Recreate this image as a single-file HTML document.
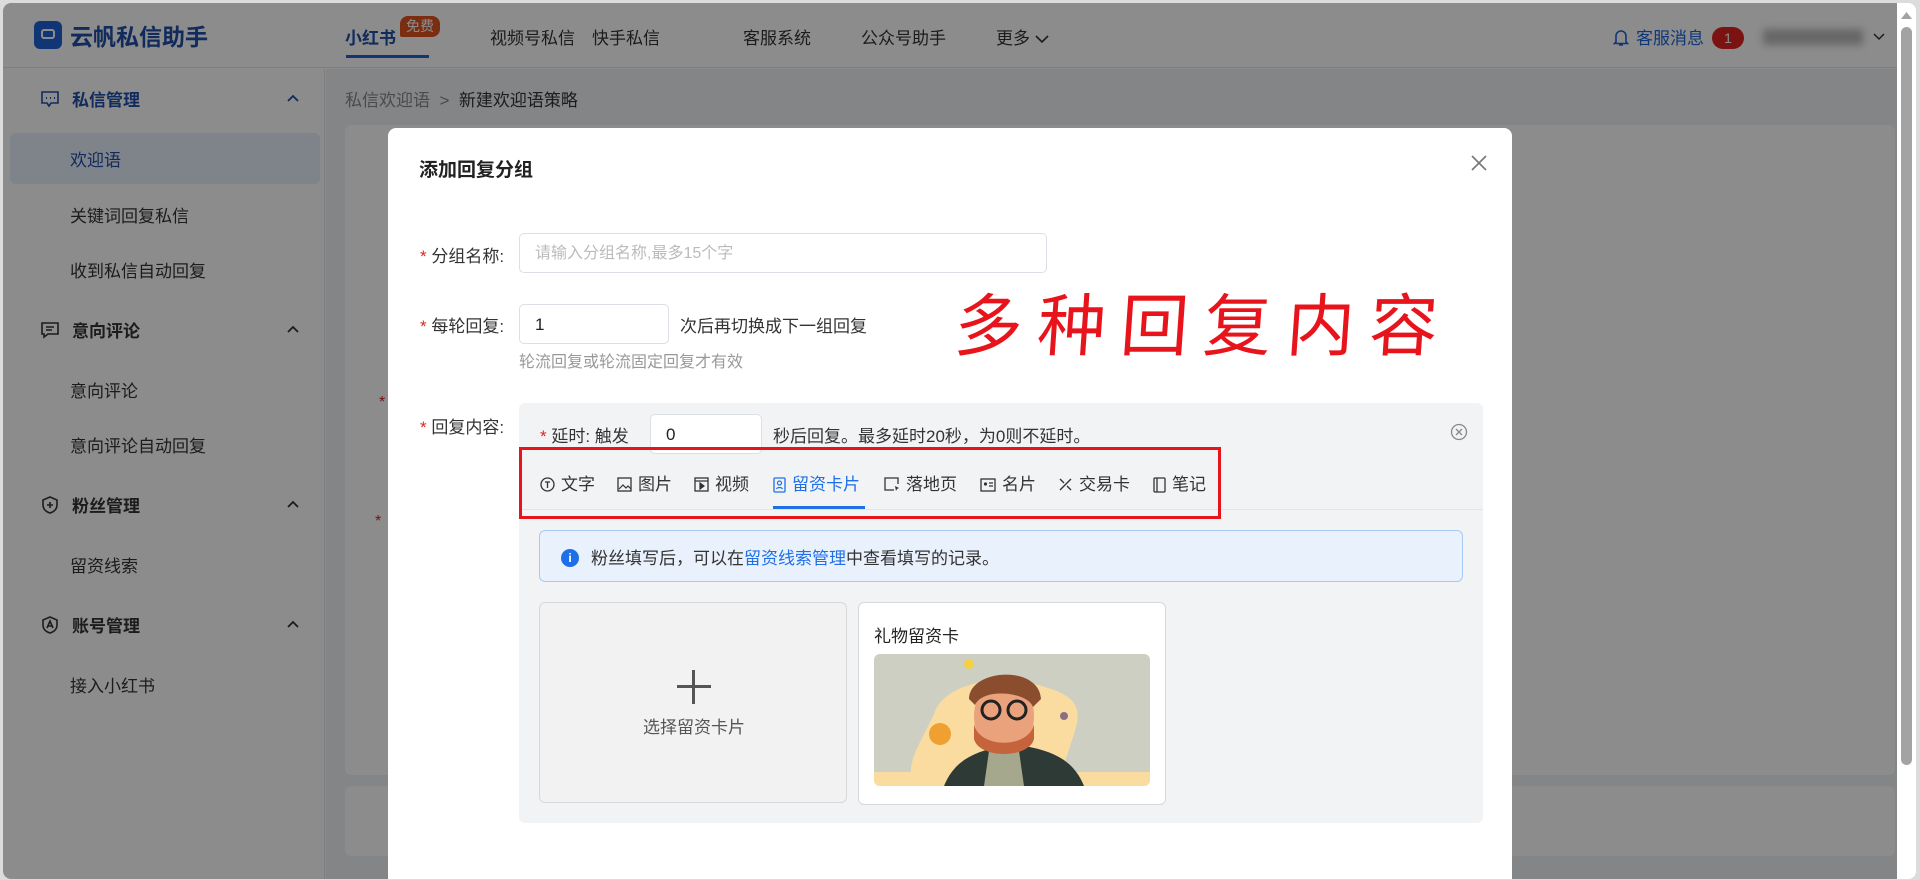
<!DOCTYPE html>
<html><head><meta charset="utf-8"><style>
*{margin:0;padding:0;box-sizing:border-box}
body{width:1920px;height:880px;overflow:hidden;background:#dcdcdc;font-family:"Liberation Sans","Noto Sans CJK SC",sans-serif;position:relative;color:#333;line-height:1}
.a{position:absolute;white-space:nowrap}
#win{position:absolute;left:3px;top:3px;width:1913px;height:876px;background:#fff;border-radius:8px;overflow:hidden}
.ov{position:absolute;left:0;top:0;width:1894px;height:876px;background:rgba(0,0,0,.45)}
.f17{font-size:17px}
.tab{position:absolute;display:flex;align-items:center;gap:6px}
.tab svg{flex:none}
</style></head><body>
<div id="win">
 <!-- header -->
 <div class="a" style="left:0;top:0;width:1894px;height:65px;background:#fff;border-bottom:1px solid #e5e5e5"></div>
 <div class="a" style="left:31px;top:18px;width:28px;height:28px;background:#1f63d8;border-radius:6px"><div style="position:absolute;left:7px;top:8px;width:14px;height:10px;border:2px solid #fff;border-radius:3px"></div></div>
 <div class="a" style="left:67px;top:23px;font-size:23px;font-weight:bold;color:#1f4fa8">云帆私信助手</div>
 <div class="a f17" style="left:342px;top:27px;color:#1f4fa8;font-weight:bold">小红书</div>
 <div class="a" style="left:397px;top:13px;width:40px;height:21px;background:#e0531f;border-radius:8px 8px 8px 2px;color:#fff;font-size:14px;text-align:center;line-height:21px">免费</div>
 <div class="a" style="left:343px;top:52px;width:83px;height:3px;background:#1f63d8"></div>
 <div class="a f17" style="left:487px;top:27px;color:#333">视频号私信</div>
 <div class="a f17" style="left:589px;top:27px;color:#333">快手私信</div>
 <div class="a f17" style="left:740px;top:27px;color:#333">客服系统</div>
 <div class="a f17" style="left:858px;top:27px;color:#333">公众号助手</div>
 <div class="a f17" style="left:993px;top:27px;color:#333">更多 <svg width="14" height="10" viewBox="0 0 14 10"><path d="M1 2l6 6 6-6" stroke="#333" stroke-width="1.6" fill="none"/></svg></div>
 <svg class="a" style="left:1610px;top:25px" width="16" height="19" viewBox="0 0 16 19"><path d="M3 14V8a5 5 0 0110 0v6l1.5 1.5h-13zM6 17h4" stroke="#1f63d8" stroke-width="1.6" fill="none"/></svg>
 <div class="a f17" style="left:1633px;top:27px;color:#1f63d8">客服消息</div>
 <div class="a" style="left:1709px;top:24px;width:32px;height:22px;background:#e02323;border-radius:11px;color:#fff;font-size:14px;text-align:center;line-height:22px">1</div>
 <div class="a" style="left:1760px;top:26px;width:100px;height:16px;background:#bbb;filter:blur(4px)"></div>
 <svg class="a" style="left:1870px;top:30px" width="12" height="8" viewBox="0 0 12 8"><path d="M1 1l5 5 5-5" stroke="#333" stroke-width="1.5" fill="none"/></svg>
 <!-- sidebar -->
 <div class="a" style="left:0;top:66px;width:322px;height:810px;background:#fff;border-right:1px solid #e5e5e5"></div>
 <div class="a" style="left:7px;top:130px;width:310px;height:51px;background:#e8eefb;border-radius:6px"></div>
 <div class="a f17" style="left:69px;top:89px;color:#1f4fa8;font-weight:bold">私信管理</div>
 <div class="a f17" style="left:67px;top:149px;color:#1f4fa8">欢迎语</div>
 <div class="a f17" style="left:67px;top:205px">关键词回复私信</div>
 <div class="a f17" style="left:67px;top:260px">收到私信自动回复</div>
 <div class="a f17" style="left:69px;top:320px;font-weight:bold">意向评论</div>
 <div class="a f17" style="left:67px;top:380px">意向评论</div>
 <div class="a f17" style="left:67px;top:435px">意向评论自动回复</div>
 <div class="a f17" style="left:69px;top:495px;font-weight:bold">粉丝管理</div>
 <div class="a f17" style="left:67px;top:555px">留资线索</div>
 <div class="a f17" style="left:69px;top:615px;font-weight:bold">账号管理</div>
 <div class="a f17" style="left:67px;top:675px">接入小红书</div>
 <svg class="a" style="left:37px;top:86px" width="20" height="20" viewBox="0 0 20 20"><path d="M2 3h16v11H11l-2 3-2-3H2z" stroke="#1f4fa8" stroke-width="1.6" fill="none"/><path d="M6 9h1M10 9h1M14 9h1" stroke="#1f4fa8" stroke-width="2"/></svg>
 <svg class="a" style="left:37px;top:317px" width="20" height="20" viewBox="0 0 20 20"><path d="M2 3h16v11H8l-4 3v-3H2z M6 7h8M6 10h6" stroke="#333" stroke-width="1.6" fill="none"/></svg>
 <svg class="a" style="left:37px;top:492px" width="20" height="20" viewBox="0 0 20 20"><path d="M10 2l7 3v5c0 4-3 7-7 8-4-1-7-4-7-8V5z M7 10h6M10 7v6" stroke="#333" stroke-width="1.6" fill="none"/></svg>
 <svg class="a" style="left:37px;top:612px" width="20" height="20" viewBox="0 0 20 20"><path d="M10 2l7 3v5c0 4-3 7-7 8-4-1-7-4-7-8V5z M7 13l3-7 3 7M8 11h4" stroke="#333" stroke-width="1.6" fill="none"/></svg>
 <svg class="a" style="left:284px;top:91px" width="12" height="8" viewBox="0 0 12 8"><path d="M1 7l5-5 5 5" stroke="#1f4fa8" stroke-width="1.8" fill="none"/></svg>
 <svg class="a" style="left:284px;top:322px" width="12" height="8" viewBox="0 0 12 8"><path d="M1 7l5-5 5 5" stroke="#333" stroke-width="1.8" fill="none"/></svg>
 <svg class="a" style="left:284px;top:497px" width="12" height="8" viewBox="0 0 12 8"><path d="M1 7l5-5 5 5" stroke="#333" stroke-width="1.8" fill="none"/></svg>
 <svg class="a" style="left:284px;top:617px" width="12" height="8" viewBox="0 0 12 8"><path d="M1 7l5-5 5 5" stroke="#333" stroke-width="1.8" fill="none"/></svg>
 <!-- content -->
 <div class="a" style="left:323px;top:66px;width:1571px;height:810px;background:#f0f2f5"></div>
 <div class="a f17" style="left:342px;top:89px;color:#888">私信欢迎语 &nbsp;&gt;&nbsp; <span style="color:#333">新建欢迎语策略</span></div>
 <div class="a" style="left:342px;top:122px;width:1550px;height:650px;background:#fff;border-radius:6px"></div>
 <div class="a" style="left:342px;top:783px;width:1550px;height:70px;background:#fff;border-radius:6px"></div>
 <div class="a" style="left:376px;top:392px;color:#e02323;font-size:16px">*</div>
 <div class="a" style="left:372px;top:511px;color:#e02323;font-size:16px">*</div>
 <div class="ov"></div>
 <!-- scrollbar -->
 <div class="a" style="left:1894px;top:0;width:19px;height:876px;background:#fff"></div>
 <div class="a" style="left:1898px;top:24px;width:11px;height:738px;background:#a3a3a3;border-radius:6px"></div>
 <svg class="a" style="left:1898px;top:8px" width="11" height="8"><path d="M0 8L5.5 1 11 8z" fill="#a3a3a3"/></svg>
 <!-- modal -->
 <div class="a" style="left:385px;top:125px;width:1124px;height:760px;background:#fff;border-radius:8px"></div>
 <div class="a" style="left:416px;top:158px;font-size:19px;font-weight:bold;color:#222">添加回复分组</div>
 <svg class="a" style="left:1467px;top:151px" width="18" height="18"><path d="M2 2l14 14M16 2L2 16" stroke="#777" stroke-width="1.6"/></svg>
 <div class="a f17" style="left:417px;top:245px"><span style="color:#e02323">* </span>分组名称:</div>
 <div class="a" style="left:516px;top:230px;width:528px;height:40px;border:1px solid #dcdfe6;border-radius:5px;padding:12px 15px;font-size:16px;color:#bbb">请输入分组名称,最多15个字</div>
 <div class="a f17" style="left:417px;top:315px"><span style="color:#e02323">* </span>每轮回复:</div>
 <div class="a" style="left:516px;top:301px;width:150px;height:40px;border:1px solid #dcdfe6;border-radius:5px;padding:11px 15px;font-size:17px;color:#222">1</div>
 <div class="a f17" style="left:677px;top:315px">次后再切换成下一组回复</div>
 <div class="a" style="left:516px;top:352px;font-size:16px;color:#999">轮流回复或轮流固定回复才有效</div>
 <div class="a" style="left:952px;top:284px;font-size:68px;color:#e8141c;letter-spacing:15px;font-family:'Noto Sans CJK SC',sans-serif;font-weight:normal;transform:skewX(-4deg)">多种回复内容</div>
 <div class="a f17" style="left:417px;top:416px"><span style="color:#e02323">* </span>回复内容:</div>
 <div class="a" style="left:516px;top:400px;width:964px;height:420px;background:#f2f3f5;border-radius:6px"></div>
 <div class="a f17" style="left:537px;top:425px"><span style="color:#e02323">* </span>延时: 触发</div>
 <div class="a" style="left:647px;top:411px;width:112px;height:40px;background:#fff;border:1px solid #dcdfe6;border-radius:5px;padding:11px 15px;font-size:17px;color:#222">0</div>
 <div class="a f17" style="left:770px;top:425px">秒后回复。最多延时20秒，为0则不延时。</div>
 <svg class="a" style="left:1447px;top:420px" width="18" height="18"><circle cx="9" cy="9" r="7.5" stroke="#888" stroke-width="1.3" fill="none"/><path d="M6 6l6 6M12 6l-6 6" stroke="#888" stroke-width="1.3"/></svg>
 <div class="a" style="left:516px;top:506px;width:964px;height:1px;background:#e2e4e8"></div>
 <div class="a" style="left:770px;top:503px;width:92px;height:3px;background:#1f6fe8"></div>
 <div class="a f17" style="left:537px;top:473px;color:#333">
  <span class="tab" style="left:0"><svg width="15" height="15" viewBox="0 0 15 15"><circle cx="7.5" cy="7.5" r="6.5" stroke="#333" stroke-width="1.3" fill="none"/><path d="M5 5h5M7.5 5v6" stroke="#333" stroke-width="1.3"/></svg>文字</span>
  <span class="tab" style="left:77px"><svg width="15" height="15" viewBox="0 0 15 15"><rect x="1" y="1" width="13" height="13" stroke="#333" stroke-width="1.3" fill="none"/><path d="M2 12l4-4 3 3 2-2 3 3" stroke="#333" stroke-width="1.2" fill="none"/></svg>图片</span>
  <span class="tab" style="left:154px"><svg width="15" height="15" viewBox="0 0 15 15"><rect x="1" y="1" width="13" height="13" stroke="#333" stroke-width="1.3" fill="none"/><path d="M1 4h13M6 6v6l4-3z" stroke="#333" stroke-width="1.2" fill="#333"/></svg>视频</span>
  <span class="tab" style="left:233px;color:#1f6fe8"><svg width="13" height="16" viewBox="0 0 13 16"><rect x="1" y="1" width="11" height="14" rx="1" stroke="#1f6fe8" stroke-width="1.3" fill="none"/><circle cx="6.5" cy="6" r="2" stroke="#1f6fe8" stroke-width="1.2" fill="none"/><path d="M3.5 12c1-2 5-2 6 0" stroke="#1f6fe8" stroke-width="1.2" fill="none"/></svg>留资卡片</span>
  <span class="tab" style="left:344px"><svg width="16" height="15" viewBox="0 0 16 15"><path d="M10 13H1V1h13v6" stroke="#333" stroke-width="1.3" fill="none"/><path d="M11 9l4 2-2 1-1 2z" fill="#333"/></svg>落地页</span>
  <span class="tab" style="left:440px"><svg width="16" height="14" viewBox="0 0 16 14"><rect x="1" y="1" width="14" height="12" stroke="#333" stroke-width="1.3" fill="none"/><circle cx="5.5" cy="6" r="1.6" fill="#333"/><path d="M9 5h4M9 8h4" stroke="#333" stroke-width="1.2"/></svg>名片</span>
  <span class="tab" style="left:518px"><svg width="15" height="15" viewBox="0 0 15 15"><path d="M2 13L13 2M2 2l4 4M9 9l4 4" stroke="#333" stroke-width="1.4"/></svg>交易卡</span>
  <span class="tab" style="left:613px"><svg width="13" height="16" viewBox="0 0 13 16"><rect x="1" y="1" width="11" height="14" rx="1" stroke="#333" stroke-width="1.3" fill="none"/><path d="M4 1v14" stroke="#333" stroke-width="1.3"/></svg>笔记</span>
 </div>
 <div class="a" style="left:516px;top:444px;width:702px;height:72px;border:3px solid #e8141c"></div>
 <div class="a" style="left:536px;top:527px;width:924px;height:52px;background:#e9f1fc;border:1px solid #a8c9f5;border-radius:6px"></div>
 <div class="a" style="left:558px;top:546px;width:18px;height:18px;border-radius:50%;background:#1f6fe8;color:#fff;font-size:12px;font-weight:bold;text-align:center;line-height:18px">i</div>
 <div class="a f17" style="left:588px;top:547px">粉丝填写后，可以在<span style="color:#1f6fe8">留资线索管理</span>中查看填写的记录。</div>
 <div class="a" style="left:536px;top:599px;width:308px;height:201px;background:#f2f2f2;border:1px solid #d8d8d8;border-radius:6px"></div>
 <div class="a" style="left:674px;top:682px;width:34px;height:3px;background:#555"></div>
 <div class="a" style="left:689px;top:667px;width:3px;height:34px;background:#555"></div>
 <div class="a f17" style="left:640px;top:716px;color:#555">选择留资卡片</div>
 <div class="a" style="left:855px;top:599px;width:308px;height:203px;background:#fff;border:1px solid #d8d8d8;border-radius:6px"></div>
 <div class="a f17" style="left:871px;top:625px;color:#222">礼物留资卡</div>
 <svg class="a" style="left:871px;top:651px;border-radius:6px" width="276" height="132" viewBox="0 0 276 132">
  <rect width="276" height="132" fill="#cdcfc2"/>
  <path d="M60 60c10-30 60-40 100-30s50 20 40 50-10 40-30 52H40c-10-20 5-40 20-72z" fill="#fbdca0"/>
  <rect x="0" y="118" width="276" height="14" fill="#fbdca0"/>
  <circle cx="66" cy="80" r="11" fill="#f0a030"/>
  <circle cx="95" cy="10" r="5" fill="#f5d040"/>
  <circle cx="190" cy="62" r="4" fill="#8a7080"/>
  <path d="M70 132c10-25 30-35 60-40h20c30 5 50 15 60 40z" fill="#2e3a36"/>
  <path d="M110 132l5-35h30l5 35z" fill="#a6a88e"/>
  <ellipse cx="130" cy="62" rx="30" ry="38" fill="#e9a27c"/>
  <path d="M100 70c5 25 55 25 60 0v15c-5 20-55 20-60 0z" fill="#c5643c"/>
  <path d="M95 45c0-30 70-35 72 0l-8 8c-5-15-50-20-58-2z" fill="#8a4e2e"/>
  <circle cx="117" cy="56" r="9" stroke="#222" stroke-width="3" fill="none"/>
  <circle cx="143" cy="56" r="9" stroke="#222" stroke-width="3" fill="none"/>
 </svg>
</div>
</body></html>
